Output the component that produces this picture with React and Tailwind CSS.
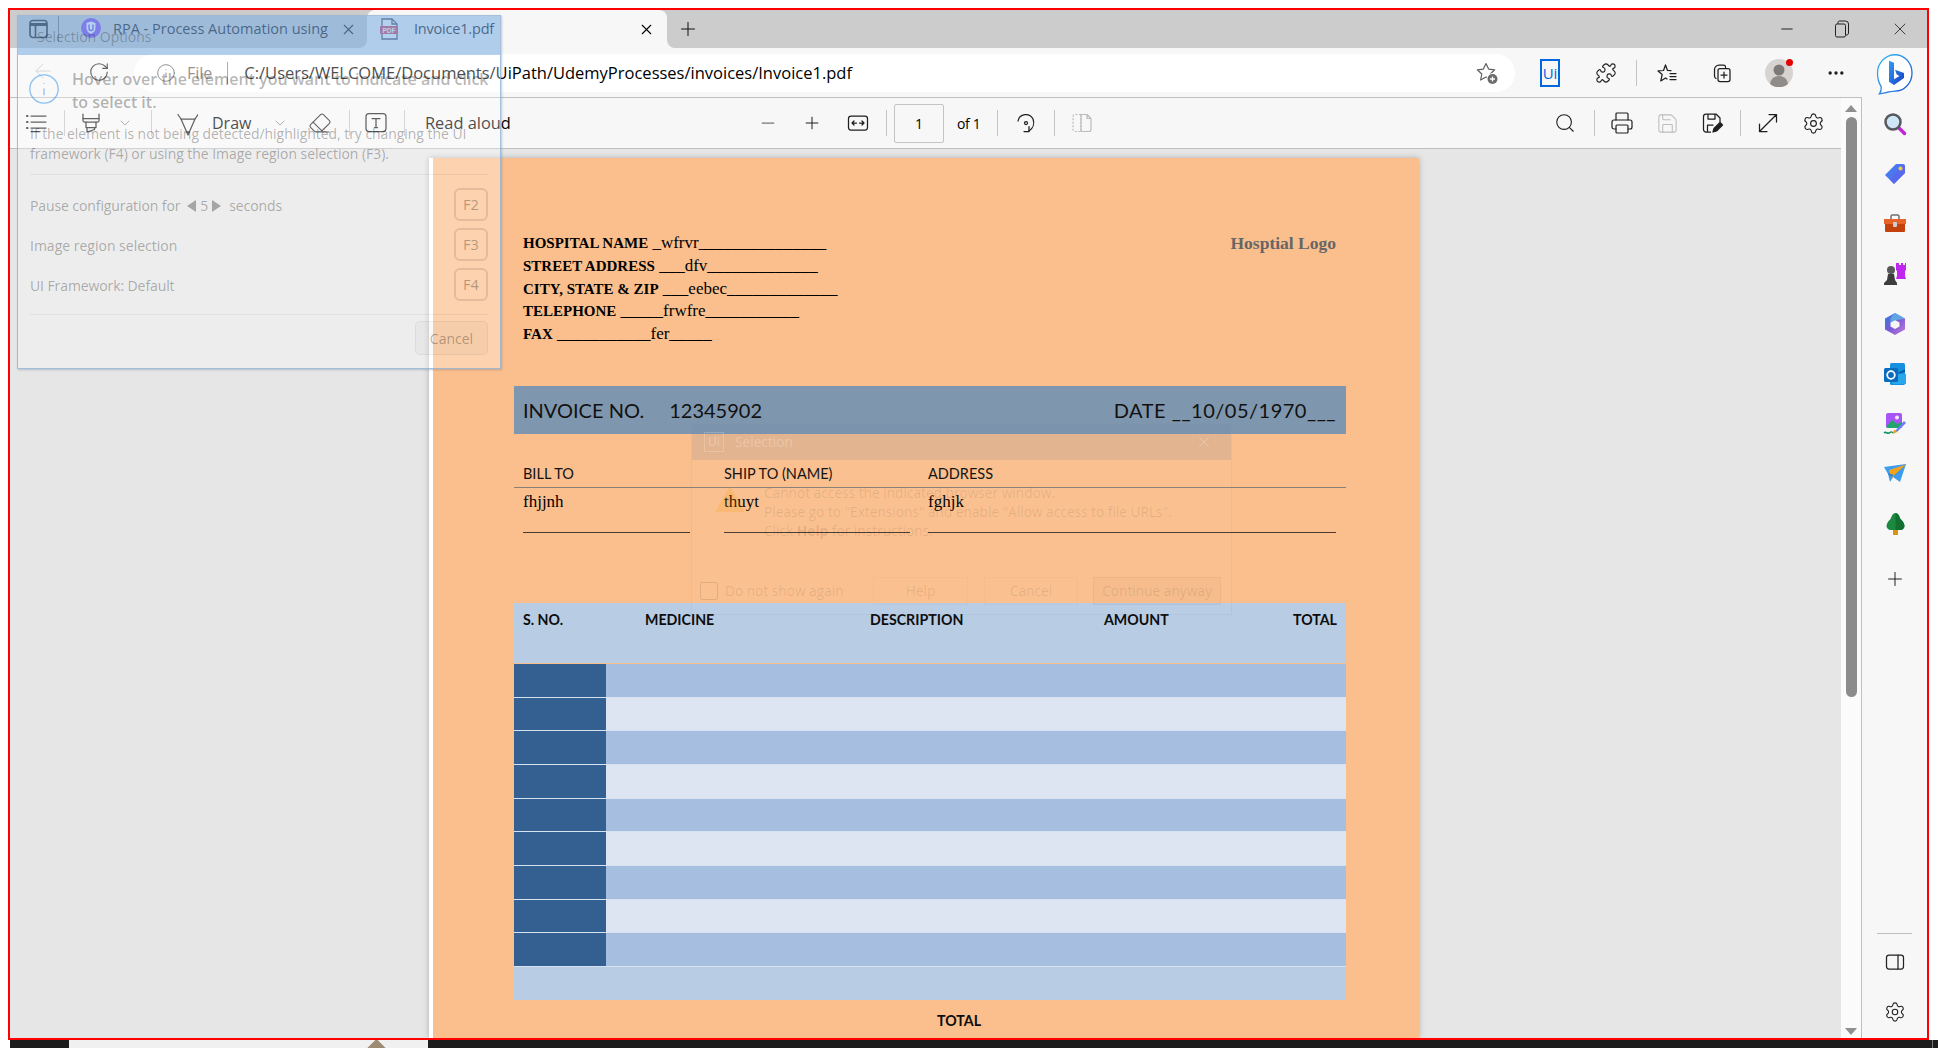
import React from "react";
import {
  X, Plus, Minus, ArrowLeft, RotateCw, Info, Puzzle, Ellipsis, Search, Printer, ChevronDown, Eraser, Settings, Save,
} from "lucide-react";

const sw = 1.25;
const ui = { fontFamily: '"Open Sans", "Noto Sans", sans-serif' };
const cal = { fontFamily: 'Lato, "Open Sans", sans-serif' };
const cam = { fontFamily: '"Liberation Serif", serif' };

const Sep = ({ className = "" }) => <div className={`w-px h-[26px] bg-[#c4c4c4] shrink-0 ${className}`} />;
const Cell = ({ className = "", children }) => (
  <div className={`w-6 h-6 flex items-center justify-center shrink-0 text-[#1f1f1f] ${className}`}>{children}</div>
);
const S = ({ size = 24, children, vb = "0 0 24 24", stroke = "currentColor" }) => (
  <svg width={size} height={size} viewBox={vb} fill="none" stroke={stroke} strokeWidth={sw} strokeLinecap="round" strokeLinejoin="round">{children}</svg>
);

const TabsIcon = () => (
  <svg width="20" height="20" viewBox="0 0 20 20" fill="none" stroke="#111" strokeWidth="1.700" className="ml-[19px] shrink-0">
    <rect x="1" y="1.500" width="17" height="17" rx="3" />
    <path d="M1 5.500h17" strokeWidth="3" />
    <path d="M6.500 6v12" />
  </svg>
);
const TabPurple = () => (
  <svg width="20" height="20" viewBox="0 0 20 20">
    <circle cx="10" cy="10" r="10" fill="#7c3aed" />
    <path d="M10 3.500l4.500 1.600v5c0 3-2 5-4.500 6-2.500-1-4.500-3-4.500-6v-5z" fill="#fff" />
    <path d="M8 6.500v4a2 2 0 0 0 4 0v-4" fill="none" stroke="#7c3aed" strokeWidth="1.500" />
  </svg>
);
const PdfIcon = () => (
  <svg width="20" height="22" viewBox="0 0 20 22">
    <path d="M3 1h10l5 5v15H3z" fill="#fff" stroke="#3a3f55" strokeWidth="1.300" />
    <path d="M13 1v5h5" fill="none" stroke="#3a3f55" strokeWidth="1.300" />
    <rect x="1" y="8" width="18" height="8" rx="1" fill="#d1344b" />
    <text x="10" y="14.500" textAnchor="middle" fontSize="6.500" fontWeight="700" fill="#fff" fontFamily="Liberation Sans, sans-serif">PDF</text>
  </svg>
);
const StarPlus = () => (
  <svg width="24" height="24" viewBox="0 0 24 24" fill="none">
    <path d="M11 2.500l2.600 5.600 6.100.7-4.500 4.200 1.200 6-5.400-3-5.400 3 1.200-6L2.300 8.800l6.100-.7z" stroke="#5f5f5f" strokeWidth="1.200" strokeLinejoin="round" />
    <circle cx="17.500" cy="18" r="6" fill="#fff" />
    <circle cx="17.500" cy="18" r="5" fill="#6b6b6b" />
    <path d="M15 18h5M17.500 15.500v5" stroke="#fff" strokeWidth="1.300" />
  </svg>
);
const UiIcon = () => (
  <div className="w-5 h-[28px] border-2 border-[#0067df] flex items-center justify-center text-[#0067df] text-[15px] leading-none" style={ui}>Ui</div>
);
const FavList = () => (
  <S>
    <path d="M10.500 4l2 5.500 3.500.2M10.500 4L8.500 9.500l-5.500.4 4.200 3.500L5.800 20l4.700-3 1.500 1" />
    <path d="M15 12.500h6M15 15.500h6M15 18.500h6" />
  </S>
);
const Collections = () => (
  <S>
    <path d="M9 4h4.500a2 2 0 0 1 2 2v.500M6 17.500c-1-.5-1.500-1.300-1.500-2.500V8.500A4.500 4.500 0 0 1 9 4" />
    <rect x="8" y="7.500" width="12" height="13" rx="2" />
    <path d="M14 11v6M11 14h6" />
  </S>
);
const Avatar = () => (
  <div className="relative w-7 h-[28px]">
    <svg width="28" height="28" viewBox="0 0 28 28">
      <circle cx="14" cy="14" r="14" fill="#d6d3d1" />
      <circle cx="14" cy="11" r="5.500" fill="#7d7a78" />
      <path d="M5 25c1-6 5-8 9-8s8 2 9 8a14 14 0 0 1-18 0z" fill="#8f8c8a" />
    </svg>
    <div className="absolute right-0 top-0 w-[7px] h-[7px] rounded-full bg-[#e60000]" />
  </div>
);
const Bing = () => (
  <svg width="38" height="42" viewBox="0 0 38 38" preserveAspectRatio="none">
    <defs>
      <linearGradient id="bingRing" x1="0" y1="0" x2="1" y2="1"><stop offset="0" stopColor="#36bdf5" /><stop offset="1" stopColor="#1b4fd0" /></linearGradient>
      <linearGradient id="bingB" x1="0" y1="0" x2="1" y2="1"><stop offset="0" stopColor="#2f9df4" /><stop offset="1" stopColor="#1a3fc4" /></linearGradient>
    </defs>
    <path d="M19 1.500c9.500 0 17 7.500 17 16.500s-7.500 16.500-17 16.500c-4 0-11 2-15.500 2.500 1.500-2 2-4.500 1.700-6.500C2.800 27 1.500 23 1.500 18 1.500 9 9.500 1.500 19 1.500z" fill="#fff" stroke="url(#bingRing)" strokeWidth="1.300" />
    <path d="M13 7l5 1.800v15l5.500-3-2.800-1.400-1.700-4.300 9 3v4.500L18 29l-5-3z" fill="url(#bingB)" />
  </svg>
);

const Highlighter = () => (
  <S size={26}>
    <path d="M5 3v6.500c0 1 .5 1.500 1.500 1.500h13c1 0 1.500-.5 1.500-1.500V3" />
    <path d="M8 11v5.500h10V11M5 7.500h16" />
    <path d="M9 16.500V21l7.500-2.500v-2" />
  </S>
);
const DrawPen = () => (
  <S size={28}>
    <path d="M4 3.500l3 4.500h14l3-4.500" />
    <path d="M7 8l7 16 7-16" />
    <path d="M12.500 21h3" />
  </S>
);
const TextBox = () => (
  <S size={24}>
    <rect x="2" y="2.500" width="20" height="18" rx="3" />
    <path d="M8 7.500h8M12 7.500v9M10.500 16.500h3" />
  </S>
);
const ListIcon = () => (
  <S size={24}>
    <path d="M3 5h.5M3 11h.5M3 17h.5" strokeWidth="2.200" />
    <path d="M7 5h15M7 11h15M7 17h15M7 20.500h9" />
  </S>
);
const FitWidth = () => (
  <S size={24}>
    <rect x="2.500" y="5" width="19" height="14" rx="2.500" />
    <path d="M6 12h4.500M6 12l2-2M6 12l2 2M18 12h-4.500M18 12l-2-2M18 12l-2 2" />
  </S>
);
const Rotate = () => (
  <S size={24}>
    <path d="M4 10a8 8 0 0 1 15 -2c1.500 4 .5 9-4 12" />
    <circle cx="12" cy="12" r="1.500" />
    <path d="M15 15.500v5h-5" />
  </S>
);
const TwoPage = () => (
  <svg width="24" height="24" viewBox="0 0 24 24" fill="none" stroke="#bcbcbc" strokeWidth="1.200" strokeLinejoin="round">
    <path d="M11 3.500H5a2 2 0 0 0-2 2v13a2 2 0 0 0 2 2h6z" strokeDasharray="2 1.500" />
    <path d="M11 3.500h6l4 4v11a2 2 0 0 1-2 2h-8zM17 3.500v4h4" />
  </svg>
);
const SaveAs = () => (
  <svg width="24" height="24" viewBox="0 0 24 24" fill="none" stroke="#1f1f1f" strokeWidth="1.250" strokeLinejoin="round">
    <path d="M11 21H6a2.500 2.500 0 0 1-2.500-2.500v-13A2.500 2.500 0 0 1 6 3h10l4 4v4" />
    <path d="M8 3v5h7V3M7.500 21v-7h6" />
    <path d="M13 21l1-3.500 6-6 2.500 2.500-6 6z" fill="#1f1f1f" />
  </svg>
);
const Expand = () => (
  <S size={24}>
    <path d="M4 20L20 4M13 3.500h7.500V11M3.500 13v7.500H11" />
  </S>
);
const PanelR = () => (
  <S size={20} vb="0 0 20 20">
    <rect x="1.500" y="3" width="17" height="14" rx="2.500" />
    <path d="M13 3v14" />
  </S>
);

const side = [
  <svg key="a" width="24" height="24" viewBox="0 0 24 24">
    <path d="M14.500 14.500l7 7" stroke="#c026d3" strokeWidth="3.500" strokeLinecap="round" />
    <circle cx="10" cy="10" r="7.500" fill="#cfe6f7" stroke="#55585c" strokeWidth="2.500" />
  </svg>,
  <svg key="b" width="24" height="24" viewBox="0 0 24 24">
    <path d="M13 2h7a2 2 0 0 1 2 2v7L11 22 2 13z" fill="#4a78f0" />
    <path d="M22 4v7L11 22l-4-4L20 2z" fill="#5f60e8" opacity=".6" />
    <circle cx="17.500" cy="6.500" r="2" fill="#f9c93a" />
  </svg>,
  <svg key="c" width="24" height="24" viewBox="0 0 24 24">
    <path d="M8 7V4.500A1.500 1.500 0 0 1 9.500 3h5A1.500 1.500 0 0 1 16 4.500V7" fill="none" stroke="#6f6f6f" strokeWidth="1.500" />
    <path d="M1 7h22v5H1z" fill="#e8632a" />
    <path d="M2 12h20v7a1 1 0 0 1-1 1H3a1 1 0 0 1-1-1z" fill="#c2410c" />
    <rect x="10" y="10" width="4" height="5" rx="1" fill="#cfcfcf" />
  </svg>,
  <svg key="d" width="24" height="24" viewBox="0 0 24 24">
    <path d="M14 1h2v2h2V1h2v2h2V1h1v7l-1 1v5l1 3H13l1-3V9l-1-1V1z" fill="#c026f0" />
    <circle cx="8" cy="8" r="4" fill="#58595b" />
    <path d="M5 12h6l1 6 2 3v2H1v-2l3-3z" fill="#3d3d3d" />
  </svg>,
  <svg key="e" width="24" height="24" viewBox="0 0 24 24">
    <defs><linearGradient id="m3" x1="0" y1="0" x2="1" y2="1"><stop offset="0" stopColor="#2b7de0" /><stop offset=".5" stopColor="#7a5bd6" /><stop offset="1" stopColor="#c87bd8" /></linearGradient></defs>
    <path d="M12 1l10 5.500v11L12 23 2 17.500v-11z" fill="url(#m3)" />
    <path d="M12 8l4.500 2.500v4L12 17l-4.500-2.500v-4z" fill="#f7f7f7" />
    <path d="M12 1l10 5.500-10 2-4.500 2V6z" fill="#5cc2e8" opacity=".7" />
  </svg>,
  <svg key="f" width="24" height="24" viewBox="0 0 24 24">
    <rect x="7" y="1" width="15" height="22" rx="1.500" fill="#1490df" />
    <path d="M12 12l11 0v10H9z" fill="#28a8ea" />
    <path d="M11 13l11-6v3z" fill="#0a5fa8" />
    <rect x="1" y="6" width="14" height="14" rx="1.500" fill="#0a6cbd" />
    <circle cx="8" cy="13" r="3.800" fill="none" stroke="#fff" strokeWidth="1.800" />
  </svg>,
  <svg key="g" width="24" height="24" viewBox="0 0 24 24">
    <rect x="3" y="1" width="16" height="15" rx="2" fill="#a855f7" />
    <path d="M3 15l6-7 5 4 5-2v5a2 2 0 0 1-2 1H5z" fill="#23a36d" />
    <circle cx="14" cy="5.500" r="2" fill="#f2e8ff" />
    <path d="M12 19l9-10 2 2-9 9z" fill="#6d7cf0" />
    <path d="M11 17.500l3 2.500-4 2z" fill="#f59e0b" />
    <path d="M1 21c2-2 3 1 5 0s2-2 4 0" fill="none" stroke="#14915c" strokeWidth="1.500" />
  </svg>,
  <svg key="h" width="24" height="24" viewBox="0 0 24 24">
    <path d="M1 5l22-3-6 18-7-5-3 5-2-8z" fill="#3b9cf0" />
    <path d="M23 2L5 12l5 3z" fill="#1f7dd8" />
    <path d="M23 2.500L6 8l1 4 3 0.500-1 5 2-4z" fill="#f4a41c" />
  </svg>,
  <svg key="i" width="24" height="24" viewBox="0 0 24 24">
    <rect x="10" y="17" width="5" height="6" fill="#d99412" />
    <path d="M12.500 1c3 0 4 4 5 6 2 1.500 4 5 4 7 0 2-2 4-4 4H7.500c-2 0-4-2-4-4 0-2 2-5.500 4-7 1-2 2-6 5-6z" fill="#1b8a3e" />
    <path d="M12.500 1c3 0 4 4 5 6 2 1.500 4 5 4 7 0 2-2 4-4 4h-5z" fill="#127030" />
  </svg>,
];

const lines = [
  ["HOSPITAL NAME", "_wfrvr_______________"],
  ["STREET ADDRESS", "___dfv_____________"],
  ["CITY, STATE & ZIP", "___eebec_____________"],
  ["TELEPHONE", "_____frwfre___________"],
  ["FAX", "___________fer_____"],
];

const Invoice = () => (
  <div className="ml-[419px] mt-[9px] w-[990px] h-[880px] shrink-0 bg-[#fbbf8d] border-l-4 border-white shadow-[0_0_6px_rgba(0,0,0,0.25)] pl-[81px] pr-[73px] pt-[74px] text-black overflow-hidden">
    <div className="flex justify-between pl-[9px] pr-[10px] h-[114px] leading-[22.8px]" style={cam}>
      <div className="text-[17px]">
        {lines.map(([a, b]) => (
          <div key={a} className="whitespace-nowrap"><b className="text-[15px]">{a}</b> {b}</div>
        ))}
      </div>
      <b className="text-[17.500px] text-[#666]">Hosptial Logo</b>
    </div>
    <div className="mt-[40px] h-[48px] bg-[#7f97ae] flex items-center justify-between pl-[9px] pr-[10px] text-[20px] text-[#111]" style={cal}>
      <div className="flex whitespace-nowrap"><span>INVOICE NO.</span><span className="ml-[25px]">12345902</span></div>
      <span className="whitespace-nowrap tracking-[0.5px]">DATE __10/05/1970___</span>
    </div>
    <div className="mt-[31px] h-[23px] border-b border-[#8a7f77] flex pl-[9px] text-[14.500px] text-[#111] leading-[18px]" style={cal}>
      <span className="w-[201px]">BILL TO</span>
      <span className="w-[204px]">SHIP TO (NAME)</span>
      <span>ADDRESS</span>
    </div>
    <div className="h-[25px] flex items-end pl-[9px] text-[17px] leading-[22px]" style={cam}>
      <span className="w-[201px]">fhjjnh</span>
      <span className="w-[204px]">thuyt</span>
      <span>fghjk</span>
    </div>
    <div className="mt-[19px] pl-[9px] pr-[10px] flex">
      <div className="w-[167px] h-px bg-[#4a3a30]" />
      <div className="ml-[34px] w-[186px] h-px bg-[#4a3a30]" />
      <div className="ml-[18px] flex-1 h-px bg-[#4a3a30]" />
    </div>
    <div className="mt-[70px] h-[60px] bg-[#b8cce4] flex pt-[8px] px-[9px] text-[14.200px] font-bold text-[#0d0d0d] leading-[18px]" style={cal}>
      <span className="w-[122px]">S. NO.</span>
      <span className="w-[225px]">MEDICINE</span>
      <span className="w-[234px]">DESCRIPTION</span>
      <span>AMOUNT</span>
      <span className="ml-auto">TOTAL</span>
    </div>
    <div className="mt-px flex flex-col h-[303px]">
      {[0, 1, 2, 3, 4, 5, 6, 7, 8].map((i) => (
        <div key={i} className="flex-1 flex border-b border-[#d7e2f0]">
          <div className="w-[92px] bg-[#335f91]" />
          <div className={`flex-1 ${i % 2 === 0 ? "bg-[#a6bedf]" : "bg-[#dce5f1]"}`} />
        </div>
      ))}
    </div>
    <div className="h-[33px] bg-[#b8cce4]" />
    <div className="mt-[12px] text-center pl-[58px] text-[14.200px] font-bold text-[#0d0d0d] leading-[18px]" style={cal}>TOTAL</div>
  </div>
);

const FKey = ({ children }) => (
  <div className="w-[34px] h-[33px] rounded-[6px] border-2 border-black/10 flex items-center justify-center text-[14.500px]">{children}</div>
);

const SelectionOptions = () => (
  <div className="absolute left-[17px] top-[15px] w-[484px] h-[354px] bg-white/30 border border-[#8fb0d4]/80 shadow-[1px_1px_2px_rgba(80,110,150,0.35)] flex flex-col" style={ui}>
    <div className="h-[39px] shrink-0 bg-[rgba(71,140,217,0.4)] flex items-center pl-[19px] pt-[2px] text-[14px] text-black/25">Selection Options</div>
    <div className="flex pl-[9px] pr-[12px] mt-[13px]">
      <Info size={34} strokeWidth={0.9} className="text-[#3f97ee]/60 shrink-0 mt-[4px]" />
      <div className="ml-[11px] text-[16px] leading-[23px] font-semibold text-black/30 whitespace-nowrap">Hover over the element you want to indicate and click<br />to select it.</div>
    </div>
    <div className="mx-[12px] mt-[10px] pb-[10px] border-b border-black/5 text-[13.900px] leading-[20px] text-black/30 whitespace-nowrap">
      If the element is not being detected/highlighted, try changing the UI<br />framework (F4) or using the Image region selection (F3).
    </div>
    <div className="ml-[12px] mr-[12px] mt-[13px] flex flex-col gap-[7px] text-[14px] text-black/30">
      <div className="flex items-center justify-between h-[33px]">
        <div className="flex items-center pt-[2px] tracking-[-0.1px]">Pause configuration for
          <svg width="9" height="12" viewBox="0 0 9 12" className="ml-[7px]"><path d="M9 0v12L0 6z" fill="currentColor" /></svg>
          <span className="mx-[4px]">5</span>
          <svg width="9" height="12" viewBox="0 0 9 12"><path d="M0 0v12l9-6z" fill="currentColor" /></svg>
          <span className="ml-[8px]">seconds</span></div>
        <FKey>F2</FKey>
      </div>
      <div className="flex items-center justify-between h-[33px]">
        <span className="pt-[2px]">Image region selection</span>
        <FKey>F3</FKey>
      </div>
      <div className="flex items-center justify-between h-[33px]">
        <span className="pt-[2px] tracking-[-0.1px]">UI Framework: Default</span>
        <FKey>F4</FKey>
      </div>
    </div>
    <div className="mx-[12px] mt-[13px] pt-[6px] border-t border-black/5 flex justify-end">
      <div className="w-[73px] h-[34px] rounded-[5px] bg-black/[0.025] border border-black/5 flex items-center justify-center text-[14px] text-black/30">Cancel</div>
    </div>
  </div>
);

const SelectionDialog = () => (
  <div className="absolute left-[691px] top-[423px] w-[541px] h-[192px] bg-white/[0.02] border border-[rgba(97,117,153,0.08)] flex flex-col text-black/10 text-[13.700px]" style={ui}>
    <div className="h-[36px] shrink-0 bg-[rgba(97,117,153,0.15)] flex items-center pl-[12px]">
      <div className="w-[20px] h-[20px] border border-white/20 flex items-center justify-center text-[12px] text-white/30">Ui</div>
      <span className="ml-[11px] text-white/25">Selection</span>
      <X size={18} strokeWidth={1.2} className="ml-auto mr-[18px] text-white/30" />
    </div>
    <div className="flex pl-[22px] mt-[24px] h-[93px]">
      <svg width="32" height="28" viewBox="0 0 32 28" className="shrink-0 mt-[1px]"><path d="M16 1l15 26H1z" fill="#f59e0b" fillOpacity=".2" /></svg>
      <div className="ml-[18px] leading-[19px] whitespace-nowrap -mt-[1px]">
        Cannot access the indicated browser window.<br />
        Please go to "Extensions" and enable "Allow access to file URLs".<br />
        Click <b>Help</b> for instructions.
      </div>
    </div>
    <div className="flex items-center pl-[8px] pr-[10px]">
      <div className="w-[18px] h-[18px] border border-black/10 rounded-[2px]" />
      <span className="ml-[7px]">Do not show again</span>
      <div className="ml-auto w-[95px] h-[28px] border border-black/[0.02] flex items-center justify-center">Help</div>
      <div className="ml-[16px] w-[94px] h-[28px] border border-black/[0.02] flex items-center justify-center">Cancel</div>
      <div className="ml-[15px] w-[128px] h-[28px] bg-black/[0.02] border border-black/[0.03] flex items-center justify-center">Continue anyway</div>
    </div>
  </div>
);

export default function App() {
  return (
    <div className="relative w-[1938px] h-[1048px] bg-white overflow-hidden flex flex-col" style={ui}>
      <div className="h-[8px] shrink-0" />
      <div className="ml-[8px] w-[1921px] h-[1032px] shrink-0 border-2 border-[#ff0000] flex flex-col bg-[#f7f7f7]">
        {/* tab strip */}
        <div className="h-[38px] shrink-0 flex bg-[linear-gradient(#cccccc_50%,#f7f7f7_50%)] text-[14.500px] text-black">
          <div className="w-[357px] bg-[#cccccc] rounded-br-lg flex items-center">
            <TabsIcon />
            <div className="ml-[9px] w-px h-[26px] bg-[#6f6f6f]" />
            <div className="ml-[22px] mt-[-2px]"><TabPurple /></div>
            <span className="ml-[12px] whitespace-nowrap w-[216px]">RPA - Process Automation using</span>
            <X size={17} strokeWidth={1.5} className="ml-[11px] text-black" />
          </div>
          <div className="w-[300px] bg-[#f7f7f7] rounded-t-lg flex items-center">
            <div className="ml-[12px]"><PdfIcon /></div>
            <span className="ml-[15px] tracking-[-0.2px]">Invoice1.pdf</span>
            <X size={17} strokeWidth={1.5} className="ml-auto mr-[12px] text-black" />
          </div>
          <div className="flex-1 bg-[#cccccc] rounded-bl-lg flex items-center">
            <Plus size={22} strokeWidth={1.1} className="ml-[10px] text-[#111]" />
            <Minus size={18} strokeWidth={1.2} className="ml-auto text-[#111]" />
            <svg width="16" height="18" viewBox="0 0 16 18" fill="none" stroke="#222" strokeWidth="1" className="ml-[38px]"><rect x="1.500" y="4" width="10" height="13" rx="1.500" /><path d="M4 4V2.500A1.500 1.500 0 0 1 5.500 1h6A3 3 0 0 1 14.500 4v9a2 2 0 0 1-2.500 2" /></svg>
            <X size={20} strokeWidth={1} className="ml-[40px] mr-[17px] text-[#222]" />
          </div>
        </div>
        {/* address row */}
        <div className="h-[49px] shrink-0 flex items-start pt-[6px] bg-[#f7f7f7]">
          <Cell className="ml-[21px] mt-[5px] text-[#c4c8cc]"><ArrowLeft size={24} strokeWidth={1} /></Cell>
          <Cell className="ml-[32px] mt-[6px]"><RotateCw size={22} strokeWidth={1.2} /></Cell>
          <div className="ml-[23px] w-[1381px] h-[38px] rounded-full bg-white flex items-center shrink-0">
            <Info size={20} strokeWidth={1.1} className="ml-[22px] text-[#555]" />
            <span className="ml-[11px] text-[16px] text-[#666]">File</span>
            <div className="ml-[15px] w-px h-[22px] bg-[#888]" />
            <span className="ml-[16px] text-[16.500px] text-black whitespace-nowrap">C:/Users/WELCOME/Documents/UiPath/UdemyProcesses/invoices/Invoice1.pdf</span>
            <div className="ml-auto mr-[16px]"><StarPlus /></div>
          </div>
          <div className="ml-[25px] mt-[5px] h-[28px] flex"><UiIcon /></div>
          <Cell className="ml-[34px] mt-[7px]"><Puzzle size={22} strokeWidth={1.25} /></Cell>
          <Sep className="ml-[18px] mt-[6px]" />
          <Cell className="ml-[18px] mt-[7px]"><FavList /></Cell>
          <Cell className="ml-[31px] mt-[7px]"><Collections /></Cell>
          <div className="ml-[31px] mt-[5px]"><Avatar /></div>
          <Cell className="ml-[31px] mt-[7px]"><Ellipsis size={20} strokeWidth={2} /></Cell>
          <div className="ml-[28px] -mt-[1px]"><Bing /></div>
        </div>
        {/* content */}
        <div className="flex-1 flex min-h-0">
          <div className="w-[1831px] shrink-0 flex flex-col border-t border-[#bfbfbf]">
            <div className="h-[51px] shrink-0 bg-[#f7f7f7] border-b border-[#bfbfbf] flex items-center text-[16px] text-black">
              <div className="w-[746px] shrink-0 flex items-center">
                <Cell className="ml-[14px]"><ListIcon /></Cell>
                <Sep className="ml-[16px]" />
                <Cell className="ml-[13px]"><Highlighter /></Cell>
                <ChevronDown size={16} strokeWidth={1} className="ml-[15px] text-[#555] shrink-0" />
                <Sep className="ml-[18px]" />
                <Cell className="ml-[22px]"><DrawPen /></Cell>
                <span className="ml-[14px] w-[40px]">Draw</span>
                <ChevronDown size={16} strokeWidth={1} className="ml-[20px] text-[#555] shrink-0" />
                <Cell className="ml-[20px]"><Eraser size={24} strokeWidth={1.1} /></Cell>
                <Sep className="ml-[17px]" />
                <Cell className="ml-[14px]"><TextBox /></Cell>
                <Sep className="ml-[16px]" />
                <span className="ml-[20px] text-[16.400px] whitespace-nowrap">Read aloud</span>
              </div>
              <Cell className="text-[#777]"><Minus size={20} strokeWidth={1.5} /></Cell>
              <Cell className="ml-[20px]"><Plus size={20} strokeWidth={1.2} /></Cell>
              <Cell className="ml-[22px]"><FitWidth /></Cell>
              <Sep className="ml-[16px]" />
              <div className="ml-[7px] w-[50px] h-[39px] border border-[#c4c4c4] rounded-[2px] flex items-center justify-center text-[14px]">1</div>
              <span className="ml-[13px] w-[25px] text-[14px] whitespace-nowrap tracking-[-0.3px]">of 1</span>
              <Sep className="ml-[15px]" />
              <Cell className="ml-[16px]"><Rotate /></Cell>
              <Sep className="ml-[16px]" />
              <Cell className="ml-[15px]"><TwoPage /></Cell>
              <div className="ml-auto mr-[16px] flex items-center">
                <Cell><Search size={22} strokeWidth={1.2} /></Cell>
                <Sep className="ml-[17px]" />
                <Cell className="ml-[15px]"><Printer size={24} strokeWidth={1.2} /></Cell>
                <Cell className="ml-[21px] text-[#bdbdbd]"><Save size={23} strokeWidth={1.1} /></Cell>
                <Cell className="ml-[21px]"><SaveAs /></Cell>
                <Sep className="ml-[16px]" />
                <Cell className="ml-[15px]"><Expand /></Cell>
                <Cell className="ml-[21px]"><Settings size={23} strokeWidth={1.2} /></Cell>
              </div>
            </div>
            <div className="flex-1 bg-[#e6e6e6] overflow-hidden min-h-0">
              <Invoice />
            </div>
          </div>
          <div className="w-[20px] shrink-0 bg-[#fbfbfb] border-t border-[#bfbfbf] flex flex-col items-center">
            <div className="mt-[7px] w-0 h-0 border-x-[6px] border-x-transparent border-b-[7px] border-b-[#909090]" />
            <div className="mt-[5px] w-[11px] h-[580px] rounded-full bg-[#8c8c8c]" />
            <div className="mt-auto mb-[3px] w-0 h-0 border-x-[6px] border-x-transparent border-t-[7px] border-t-[#909090]" />
          </div>
          <div className="flex-1 flex flex-col items-center border-l border-[#bfbfbf] pt-[2px] pb-[1px] bg-[#f7f7f7]">
            {side.map((ic, i) => (
              <div key={i} className="h-[50px] flex items-center justify-center shrink-0">{ic}</div>
            ))}
            <div className="h-[50px] mt-[5px] flex items-center justify-center text-[#222]"><Plus size={22} strokeWidth={1.1} /></div>
            <div className="mt-auto w-[35px] h-px bg-[#bfbfbf]" />
            <div className="h-[50px] mt-[3px] flex items-center justify-center text-[#222]"><PanelR /></div>
            <div className="h-[50px] flex items-center justify-center text-[#222]"><Settings size={22} strokeWidth={1.2} /></div>
          </div>
        </div>
      </div>
      {/* taskbar sliver */}
      <div className="ml-[10px] flex-1 bg-[#1c1c1c] flex overflow-hidden relative">
        <div className="ml-[59px] w-[359px] h-[8px] bg-[#f0f0f0] flex justify-end">
          <div className="mr-[44px] w-[15px] h-[15px] mt-[2px] rotate-45 bg-[#9c8a72]" />
        </div>
        <span className="ml-[1369px] text-white text-[12px] leading-[16px] mt-[5px] whitespace-nowrap">3:13 PM</span>
        <div className="ml-auto mr-[5px] w-px h-[8px] bg-[#777]" />
      </div>
      <SelectionOptions />
      <SelectionDialog />
    </div>
  );
}
